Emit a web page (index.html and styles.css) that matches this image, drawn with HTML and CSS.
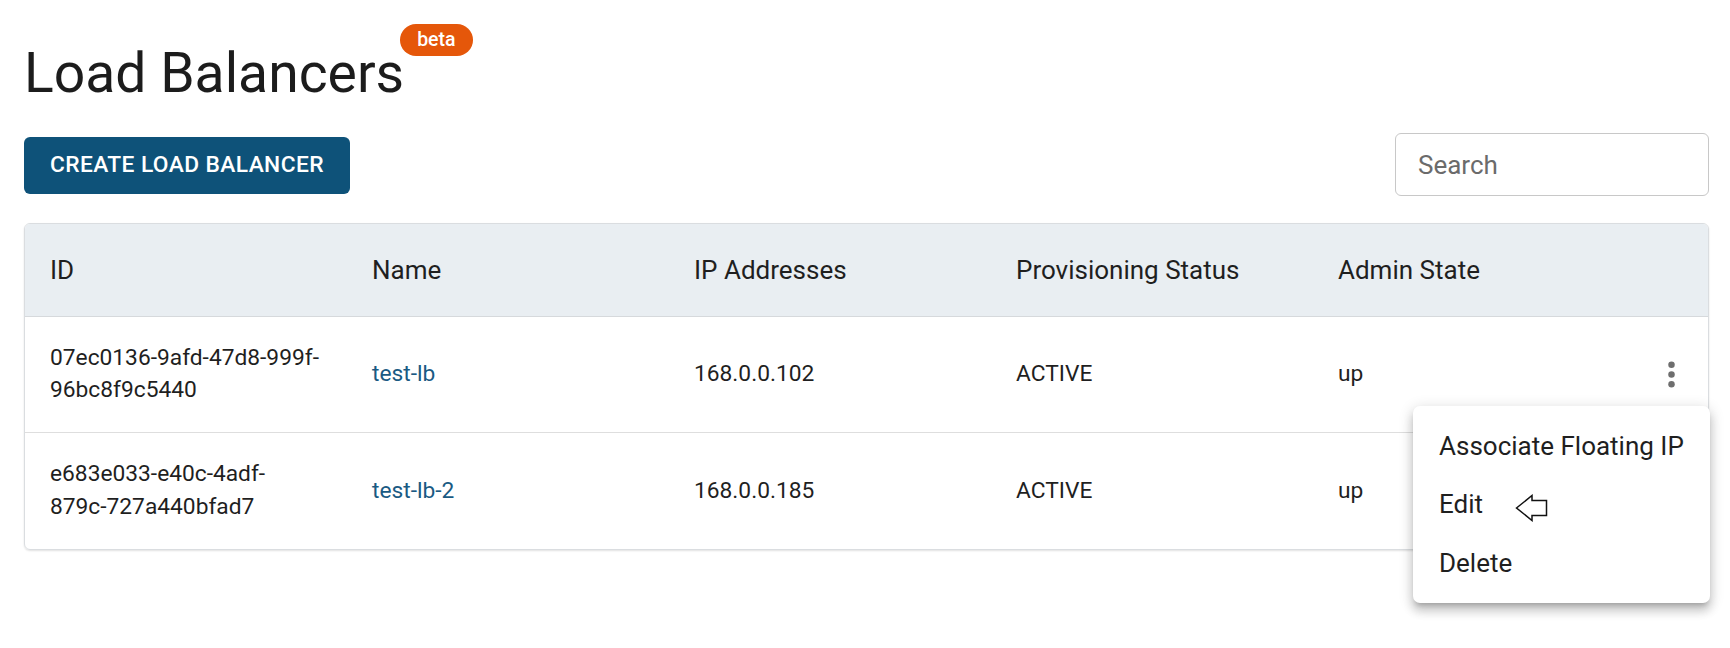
FILE: index.html
```html
<!DOCTYPE html>
<html lang="en">
<head>
<meta charset="utf-8">
<title>Load Balancers</title>
<link rel="stylesheet" href="styles.css">
</head>
<body>
<div class="page">
  <div class="title-wrap">
    <h1 class="title">Load Balancers</h1>
    <span class="badge">beta</span>
  </div>

  <div class="toolbar">
    <button class="btn-primary">CREATE LOAD BALANCER</button>
    <div class="search"><span class="search-placeholder">Search</span></div>
  </div>

  <div class="table-card">
    <table class="lb-table">
      <colgroup>
        <col class="col-main"><col class="col-main"><col class="col-main"><col class="col-main"><col class="col-main"><col class="col-actions">
      </colgroup>
      <thead>
        <tr class="head-row">
          <th>ID</th>
          <th>Name</th>
          <th>IP Addresses</th>
          <th>Provisioning Status</th>
          <th>Admin State</th>
          <th></th>
        </tr>
      </thead>
      <tbody>
        <tr class="body-row">
          <td>07ec0136-9afd-47d8-999f-<br>96bc8f9c5440</td>
          <td><a class="link">test-lb</a></td>
          <td>168.0.0.102</td>
          <td>ACTIVE</td>
          <td>up</td>
          <td class="actions">
            <svg class="kebab" viewBox="0 0 24 24" width="39" height="39"><circle cx="12" cy="6" r="2"/><circle cx="12" cy="12" r="2"/><circle cx="12" cy="18" r="2"/></svg>
          </td>
        </tr>
        <tr class="body-row last">
          <td>e683e033-e40c-4adf-<br>879c-727a440bfad7</td>
          <td><a class="link">test-lb-2</a></td>
          <td>168.0.0.185</td>
          <td>ACTIVE</td>
          <td>up</td>
          <td class="actions"></td>
        </tr>
      </tbody>
    </table>
  </div>

  <div class="menu">
    <div class="menu-item">Associate Floating IP</div>
    <div class="menu-item">Edit
      <svg class="pointer" viewBox="0 0 33 28" width="33" height="28"><polygon points="1.5,14 17,1.5 17,6.5 31.5,6.5 31.5,21.5 17,21.5 17,26.5" fill="#fff" stroke="#111" stroke-width="1.5" stroke-linejoin="miter"/></svg>
    </div>
    <div class="menu-item">Delete</div>
  </div>
</div>
</body>
</html>
```

FILE: styles.css
```css
* { box-sizing: border-box; }

html, body {
  margin: 0;
  padding: 0;
  background: #ffffff;
}

body {
  font-family: Roboto, "Liberation Sans", sans-serif;
  color: rgba(0, 0, 0, 0.87);
}

.page {
  position: relative;
  padding: 39px 21px 0 24px;
  min-height: 648px;
}

.title-wrap {
  position: relative;
  display: inline-block;
}

.title {
  margin: 0;
  font-size: 55.25px;
  line-height: 68px;
  font-weight: 400;
  color: #1c1c1c;
}

.badge {
  position: absolute;
  left: calc(100% - 4px);
  top: -15px;
  height: 32px;
  padding: 0 17px;
  border-radius: 16px;
  background: #e5570a;
  color: #fff;
  font-size: 19.5px;
  font-weight: 500;
  line-height: 32px;
  white-space: nowrap;
}

.toolbar {
  display: flex;
  justify-content: space-between;
  align-items: center;
  height: 63px;
  margin-top: 26px;
}

.btn-primary {
  height: 57px;
  margin-top: 1px;
  padding: 0 26px;
  border: none;
  border-radius: 6px;
  background: #0e5279;
  color: #ffffff;
  font-family: Roboto, "Liberation Sans", sans-serif;
  font-size: 22.75px;
  font-weight: 500;
  letter-spacing: 0.4px;
  line-height: 1;
}

.search {
  width: 314px;
  height: 63px;
  border: 1.5px solid #c8c8c8;
  border-radius: 6px;
  display: flex;
  align-items: center;
  padding: 0 22px;
}

.search-placeholder {
  font-size: 26px;
  color: #6b6b6b;
}

.table-card {
  margin-top: 27px;
  border: 1px solid #dadde0;
  border-radius: 6px;
  overflow: hidden;
  box-shadow: 0 1px 2px rgba(0, 0, 0, 0.12);
}

.lb-table {
  width: 100%;
  table-layout: fixed;
  border-collapse: collapse;
}

.col-main { width: 322px; }
.col-actions { width: auto; }

.head-row {
  background: #e9eef2;
}

.head-row th {
  height: 92px;
  padding: 0 25px;
  text-align: left;
  font-size: 26px;
  font-weight: 400;
  color: #1f1f1f;
  border-bottom: 1px solid #d6d9dc;
}

.body-row td {
  height: 116px;
  padding: 0 25px;
  font-size: 22.75px;
  line-height: 32.5px;
  color: #1f1f1f;
  vertical-align: middle;
  border-bottom: 1px solid #dedede;
}

.body-row.last td {
  border-bottom: none;
  height: 117px;
}

.link {
  color: #1a5a83;
  text-decoration: none;
}

.actions {
  text-align: center;
  padding: 0 !important;
}

.kebab {
  display: inline-block;
  vertical-align: middle;
  fill: #6e6e6e;
}

.menu {
  position: absolute;
  left: 1413px;
  top: 406px;
  width: 297px;
  height: 197px;
  padding-top: 11px;
  background: #ffffff;
  border-radius: 7px;
  box-shadow: 0 5px 5px -3px rgba(0, 0, 0, 0.2), 0 8px 10px 1px rgba(0, 0, 0, 0.14), 0 3px 14px 2px rgba(0, 0, 0, 0.12);
}

.menu-item {
  display: flex;
  align-items: center;
  height: 58.5px;
  padding: 0 26px;
  font-size: 26px;
  line-height: 39px;
  color: #1f1f1f;
}

.pointer {
  margin-left: 32px;
  margin-top: 6px;
}
```
